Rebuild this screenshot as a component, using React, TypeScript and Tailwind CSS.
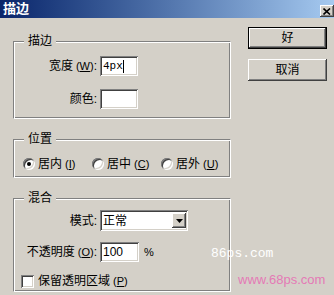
import React from "react";

const raised =
  "shadow-[inset_-1px_-1px_0_#404040,inset_1px_1px_0_#ffffff,inset_-2px_-2px_0_#808080,inset_2px_2px_0_#d4d0c8]";
const sunken =
  "shadow-[inset_1px_1px_0_#808080,inset_-1px_-1px_0_#ffffff,inset_2px_2px_0_#404040,inset_-2px_-2px_0_#d4d0c8]";
const etched =
  "relative border border-t-[#808080] border-l-[#808080] border-b-white border-r-white shadow-[inset_1px_1px_0_#ffffff,inset_-1px_-1px_0_#808080]";

function Group({
  title,
  className,
  children,
}: {
  title: string;
  className: string;
  children: React.ReactNode;
}) {
  return (
    <div className={`${etched} ${className}`}>
      <span className="absolute left-[10px] -top-[8px] px-[4px] bg-[#d4d0c8] leading-[14px]">
        {title}
      </span>
      {children}
    </div>
  );
}

function Key({ k }: { k: string }) {
  return (
    <span className="text-[11px] ml-[3px]">
      (<u>{k}</u>)
    </span>
  );
}

function Radio({ checked, label, k }: { checked?: boolean; label: string; k: string }) {
  return (
    <div className="flex items-center w-[70px]">
      <div
        className={`w-[12px] h-[12px] rounded-full bg-white flex items-center justify-center ${sunken}`}
      >
        {checked && <div className="w-[4px] h-[4px] rounded-full bg-black" />}
      </div>
      <span className="ml-[3px] leading-[14px]">
        {label}
        <Key k={k} />
      </span>
    </div>
  );
}

export default function App() {
  return (
    <div className="relative w-[334px] h-[295px] overflow-hidden bg-[#d4d0c8] text-[12px] text-black font-['Liberation_Sans','Noto_Sans_CJK_SC',sans-serif]">
      <div className="h-[18px] flex justify-between bg-gradient-to-r from-[#0a246a] to-[#a6caf0]">
        <span className="pl-[3px] pt-[2px] leading-[14px] text-[13px] font-bold text-white">描边</span>
        <div
          className={`self-end mb-[1px] w-[14px] h-[12px] bg-[#d4d0c8] flex items-center justify-center ${raised}`}
        >
          <svg width="8" height="7" viewBox="0 0 8 7">
            <path d="M0.5 0.5 L7 6.5 M7 0.5 L0.5 6.5" stroke="#000" strokeWidth="1.6" />
          </svg>
        </div>
      </div>

      <div className="flex pl-[13px]">
        <div className="w-[218px] mt-[23px] flex flex-col gap-[20px]">
          <Group title="描边" className="h-[78px] pt-[14px] flex flex-col gap-[13px]">
            <div className="flex items-center h-[20px]">
              <span className="w-[83px] text-right">
                宽度<Key k="W" />:
              </span>
              <div
                className={`ml-[3px] w-[38px] h-[20px] bg-white flex items-center pl-[3px] ${sunken}`}
              >
                <span className="font-['Liberation_Mono',monospace] text-[11px]">4px</span>
                <span className="w-[1px] h-[13px] bg-black" />
              </div>
            </div>
            <div className="flex items-center h-[20px]">
              <span className="w-[83px] text-right">颜色:</span>
              <div className={`ml-[3px] w-[38px] h-[20px] bg-white ${sunken}`} />
            </div>
          </Group>

          <Group title="位置" className="h-[39px] pt-[17px] pl-[9px] flex items-start">
            <Radio checked label="居内" k="I" />
            <Radio label="居中" k="C" />
            <Radio label="居外" k="U" />
          </Group>

          <Group title="混合" className="h-[94px] pt-[11px] flex flex-col">
            <div className="flex items-center h-[21px]">
              <span className="w-[83px] text-right">模式:</span>
              <div
                className={`ml-[3px] w-[88px] h-[21px] bg-white flex items-center justify-between pl-[3px] pr-[2px] ${sunken}`}
              >
                <span>正常</span>
                <div
                  className={`w-[14px] h-[15px] bg-[#d4d0c8] flex items-center justify-center ${raised}`}
                >
                  <svg width="7" height="4" viewBox="0 0 7 4">
                    <path d="M0 0 H7 L3.5 4 Z" fill="#000" />
                  </svg>
                </div>
              </div>
            </div>
            <div className="flex items-center h-[20px] mt-[11px]">
              <span className="w-[83px] text-right">
                不透明度<Key k="O" />:
              </span>
              <div
                className={`ml-[3px] w-[39px] h-[20px] bg-white flex items-center pl-[3px] ${sunken}`}
              >
                100
              </div>
              <span className="ml-[5px] text-[11px]">%</span>
            </div>
            <div className="flex items-center mt-[12px] pl-[7px]">
              <div className={`w-[13px] h-[13px] bg-white ${sunken}`} />
              <span className="ml-[4px] leading-[14px]">
                保留透明区域<Key k="P" />
              </span>
            </div>
          </Group>
        </div>

        <div className="ml-[17px] mt-[9px] flex flex-col gap-[10px]">
          <button className="w-[79px] h-[22px] border border-black bg-[#d4d0c8] p-0">
            <div className={`w-full h-full flex items-center justify-center ${raised}`}>好</div>
          </button>
          <button
            className={`w-[79px] h-[22px] bg-[#d4d0c8] flex items-center justify-center ${raised}`}
          >
            取消
          </button>
        </div>
      </div>

      <span className="absolute left-[211px] top-[244px] text-white font-['Liberation_Mono',monospace] text-[13px]">
        86ps.com
      </span>
      <span className="absolute left-[238px] top-[270px] text-[#e47ab6] text-[13px]">
        www.68ps.com
      </span>
    </div>
  );
}
